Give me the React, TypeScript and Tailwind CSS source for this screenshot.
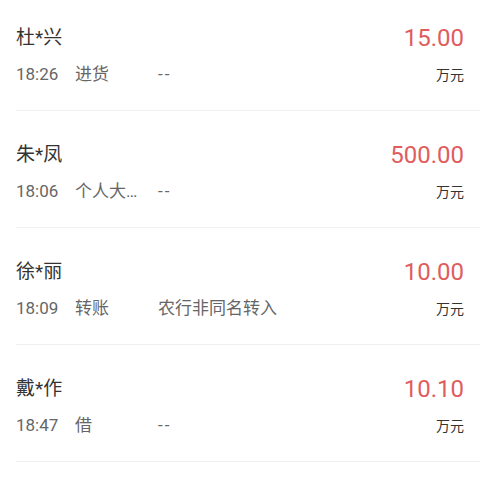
const rows = [
  { name: "杜*兴", amount: "15.00", time: "18:26", type: "进货", note: "--" },
  { name: "朱*凤", amount: "500.00", time: "18:06", type: "个人大…", note: "--" },
  { name: "徐*丽", amount: "10.00", time: "18:09", type: "转账", note: "农行非同名转入" },
  { name: "戴*作", amount: "10.10", time: "18:47", type: "借", note: "--" },
];

export default function App() {
  return (
    <div
      className="h-[480px] w-[480px] overflow-hidden bg-white"
      style={{ fontFamily: 'Roboto, "Noto Sans CJK SC", sans-serif' }}
    >
      {rows.map((r) => (
        <div
          key={r.name}
          className="ml-4 border-b border-[#f0f0f0] pb-[23px] pr-4 pt-[30px] first:pt-[24px]"
        >
          <div className="flex h-[28px] items-center justify-between">
            <span className="text-[19px] text-[#333]">{r.name}</span>
            <span className="text-[24px] text-[#e05d5d]">{r.amount}</span>
          </div>
          <div className="mt-[11px] flex h-[24px] items-center text-[17px] text-[#666]">
            <span className="w-[59px] shrink-0">{r.time}</span>
            <span className="w-[83px] shrink-0 whitespace-nowrap">{r.type}</span>
            <span className={r.note === "--" ? "whitespace-nowrap tracking-[2px]" : "whitespace-nowrap"}>
              {r.note}
            </span>
            <span className="ml-auto text-[14px] text-[#333]">万元</span>
          </div>
        </div>
      ))}
    </div>
  );
}
